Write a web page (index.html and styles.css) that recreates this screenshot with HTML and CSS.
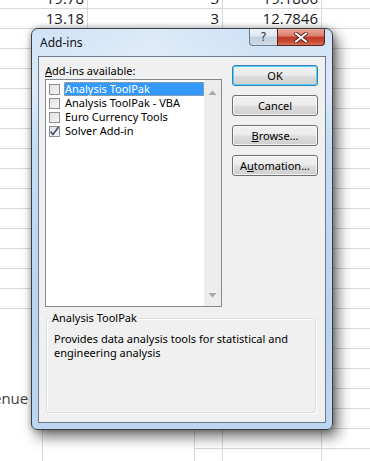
FILE: index.html
```html
<!DOCTYPE html>
<html>
<head>
<meta charset="utf-8">
<link rel="stylesheet" href="styles.css">
</head>
<body>
<div class="sheet">
  <div class="row"><div class="c c1">19.78</div><div class="c c2">3</div><div class="c c3">19.1866</div><div class="c c4"></div></div>
  <div class="row"><div class="c c1">13.18</div><div class="c c2">3</div><div class="c c3">12.7846</div><div class="c c4"></div></div>
  <div class="row"><div class="c c1"></div><div class="c c2"></div><div class="c c3"></div><div class="c c4"></div></div>
  <div class="row"><div class="c c1"></div><div class="c c2"></div><div class="c c3"></div><div class="c c4"></div></div>
  <div class="row"><div class="c c1"></div><div class="c c2"></div><div class="c c3"></div><div class="c c4"></div></div>
  <div class="row"><div class="c c1"></div><div class="c c2"></div><div class="c c3"></div><div class="c c4"></div></div>
  <div class="row"><div class="c c1"></div><div class="c c2"></div><div class="c c3"></div><div class="c c4"></div></div>
  <div class="row"><div class="c c1"></div><div class="c c2"></div><div class="c c3"></div><div class="c c4"></div></div>
  <div class="row"><div class="c c1"></div><div class="c c2"></div><div class="c c3"></div><div class="c c4"></div></div>
  <div class="row"><div class="c c1"></div><div class="c c2"></div><div class="c c3"></div><div class="c c4"></div></div>
  <div class="row"><div class="c c1"></div><div class="c c2"></div><div class="c c3"></div><div class="c c4"></div></div>
  <div class="row"><div class="c c1"></div><div class="c c2"></div><div class="c c3"></div><div class="c c4"></div></div>
  <div class="row"><div class="c c1"></div><div class="c c2"></div><div class="c c3"></div><div class="c c4"></div></div>
  <div class="row"><div class="c c1"></div><div class="c c2"></div><div class="c c3"></div><div class="c c4"></div></div>
  <div class="row"><div class="c c1"></div><div class="c c2"></div><div class="c c3"></div><div class="c c4"></div></div>
  <div class="row"><div class="c c1"></div><div class="c c2"></div><div class="c c3"></div><div class="c c4"></div></div>
  <div class="row low"><div class="c ca"></div><div class="c cb2"></div><div class="c cc"></div><div class="c c3"></div><div class="c c4"></div></div>
  <div class="row low"><div class="c ca"></div><div class="c cb2"></div><div class="c cc"></div><div class="c c3"></div><div class="c c4"></div></div>
  <div class="row low"><div class="c ca"></div><div class="c cb2"></div><div class="c cc"></div><div class="c c3"></div><div class="c c4"></div></div>
  <div class="row low"><div class="c ca"></div><div class="c cb2"></div><div class="c cc"></div><div class="c c3"></div><div class="c c4"></div></div>
  <div class="row low"><div class="c ca label">enue</div><div class="c cb2"></div><div class="c cc"></div><div class="c c3"></div><div class="c c4"></div></div>
  <div class="row low"><div class="c ca"></div><div class="c cb2"></div><div class="c cc"></div><div class="c c3"></div><div class="c c4"></div></div>
  <div class="row low"><div class="c ca"></div><div class="c cb2"></div><div class="c cc"></div><div class="c c3"></div><div class="c c4"></div></div>
  <div class="row low"><div class="c ca"></div><div class="c cb2"></div><div class="c cc"></div><div class="c c3"></div><div class="c c4"></div></div>
</div>

<div class="dialog">
  <div class="titlebar">
    <div class="title">Add-ins</div>
    <div class="caption">
      <div class="cap help">?</div>
      <div class="cap close">
        <svg width="14" height="11" viewBox="0 0 14 11"><path d="M2 1.5 L12 9.5 M12 1.5 L2 9.5" stroke="#4a1a10" stroke-width="3.6" stroke-linecap="round"/><path d="M2 1.5 L12 9.5 M12 1.5 L2 9.5" stroke="#ffffff" stroke-width="2.2" stroke-linecap="round"/></svg>
      </div>
    </div>
  </div>
  <div class="client">
    <div class="top">
      <div class="left">
        <div class="lbl"><u>A</u>dd-ins available:</div>
        <div class="listbox">
          <div class="items">
            <div class="item sel"><span class="cb"></span><span class="txt">Analysis ToolPak</span></div>
            <div class="item"><span class="cb"></span><span class="txt">Analysis ToolPak - VBA</span></div>
            <div class="item"><span class="cb"></span><span class="txt">Euro Currency Tools</span></div>
            <div class="item"><span class="cb checked"><svg width="11" height="11" viewBox="0 0 11 11"><path d="M1.5 5.5 L4 8.5 L9.5 1" fill="none" stroke="#3f4f77" stroke-width="1.6"/></svg></span><span class="txt">Solver Add-in</span></div>
          </div>
          <div class="scroll">
            <svg width="9" height="5" viewBox="0 0 9 5"><path d="M0.5 5 L4.5 0.5 L8.5 5 Z" fill="#a8a8a8"/></svg>
            <svg width="9" height="5" viewBox="0 0 9 5"><path d="M0.5 0 L4.5 4.5 L8.5 0 Z" fill="#a8a8a8"/></svg>
          </div>
        </div>
      </div>
      <div class="buttons">
        <div class="btn default">OK</div>
        <div class="btn">Cancel</div>
        <div class="btn"><u>B</u>rowse...</div>
        <div class="btn">A<u>u</u>tomation...</div>
      </div>
    </div>
    <div class="group">
      <div class="legend">Analysis ToolPak</div>
      <div class="desc">Provides data analysis tools for statistical and engineering analysis</div>
    </div>
  </div>
</div>
</body>
</html>
```

FILE: styles.css
```css
html, body {
  margin: 0;
  padding: 0;
  width: 370px;
  height: 461px;
  overflow: hidden;
  background: #ffffff;
}
.sheet {
  margin-top: -11px;
  font-family: "Open Sans", "Noto Sans", sans-serif;
  font-size: 15px;
  color: #1a1a1a;
}
.row {
  display: flex;
  height: 20px;
  box-sizing: border-box;
  border-bottom: 1px solid #d9d9d9;
}
.row.low {
  border-bottom: none;
}
.c {
  box-sizing: border-box;
  border-right: 1px solid #d9d9d9;
  text-align: right;
  line-height: 19px;
  padding-right: 3px;
  white-space: nowrap;
}
.c1 { width: 88px; }
.c2 { width: 135px; }
.c3 { width: 99px; }
.c4 { flex: 1; border-right: none; }
.ca { width: 43px; }
.cb2 { width: 152px; }
.cc { width: 28px; }
.low .cc, .low .c3, .low .c4 { border-bottom: 1px solid #d9d9d9; }
.label { text-align: left; color: #404040; padding: 0; text-indent: -7px; }

.dialog {
  position: absolute;
  left: 31px;
  top: 28px;
  width: 302px;
  height: 402px;
  box-sizing: border-box;
  border: 1px solid #3c4046;
  border-radius: 7px 7px 6px 6px;
  background: linear-gradient(180deg, #cfe2f6 0px, #dcebfa 60px, #c6ddf5 110px, #b9d4f0 300px, #bdd7f2 400px);
  box-shadow: 5px 7px 14px rgba(0,0,0,0.55), 0 0 6px rgba(0,0,0,0.3);
  display: flex;
  flex-direction: column;
  padding: 0 6px 6px 6px;
  font-family: "Noto Sans", "Open Sans", sans-serif;
  font-size: 11px;
  color: #000;
}
.titlebar {
  height: 28px;
  display: flex;
  align-items: flex-start;
  background: linear-gradient(90deg, rgba(255,255,255,0) 0%, rgba(255,255,255,0.25) 40%, rgba(200,220,240,0.2) 75%, rgba(255,255,255,0) 100%);
  margin: 0 -6px;
  padding: 0 7px 0 8px;
}
.title {
  font-size: 12px;
  line-height: 14px;
  margin-top: 7px;
  color: #111;
}
.caption {
  margin-left: auto;
  display: flex;
}
.cap {
  height: 17px;
  box-sizing: border-box;
  display: flex;
  align-items: center;
  justify-content: center;
}
.help {
  width: 28px;
  border: 1px solid #6f7d90;
  border-top: none;
  border-right: none;
  border-radius: 0 0 0 4px;
  background: linear-gradient(180deg, #eef3f9 0%, #dfe7f0 45%, #c3cfdc 50%, #cfdae6 100%);
  font-family: "DejaVu Sans", sans-serif;
  font-size: 12px;
  color: #33404f;
  line-height: 14px;
}
.close {
  width: 48px;
  border: 1px solid #5a2418;
  border-top: none;
  border-radius: 0 0 4px 0;
  background: linear-gradient(180deg, #e9a89a 0%, #d97a66 45%, #c0392a 50%, #c94a33 80%, #d9735c 100%);
}
.client {
  flex: 1;
  border: 1px solid #6c7a8c;
  background: #f0f0f0;
  display: flex;
  flex-direction: column;
  padding: 7px 9px 9px 6px;
}
.top {
  display: flex;
}
.left {
  display: flex;
  flex-direction: column;
}
.lbl {
  font-size: 11px;
  line-height: 14px;
  margin-bottom: 1px;
}
.listbox {
  width: 177px;
  height: 228px;
  box-sizing: border-box;
  border: 1px solid #828790;
  background: #fff;
  display: flex;
}
.items {
  flex: 1;
  padding: 2px 0 0 2px;
}
.item {
  display: flex;
  align-items: center;
  height: 14px;
}
.cb {
  width: 11px;
  height: 11px;
  box-sizing: border-box;
  border: 1px solid #8f8f8f;
  background: linear-gradient(135deg, #e2e2e2 0%, #f4f4f4 100%);
  margin: 0 4px 0 1px;
  display: flex;
  align-items: center;
  justify-content: center;
}
.cb svg { flex: none; }
.txt {
  flex: 1;
  height: 14px;
  line-height: 14px;
  padding-left: 1px;
  font-size: 11px;
}
.item.sel .txt {
  background: #3399ff;
  color: #fff;
  outline: 1px dotted #c9a36a;
  outline-offset: -1px;
}
.scroll {
  width: 17px;
  background: #ededed;
  display: flex;
  flex-direction: column;
  justify-content: space-between;
  align-items: center;
  padding: 10px 0 8px 0;
}
.buttons {
  margin-left: 10px;
  margin-top: 1px;
  display: flex;
  flex-direction: column;
  gap: 9px;
}
.btn {
  width: 86px;
  height: 21px;
  box-sizing: border-box;
  border: 1px solid #707070;
  border-radius: 3px;
  background: linear-gradient(180deg, #f2f2f2 0%, #ebebeb 48%, #dddddd 52%, #cfcfcf 100%);
  box-shadow: inset 0 0 0 1px rgba(255,255,255,0.7);
  text-align: center;
  line-height: 19px;
  font-size: 11px;
}
.btn.default {
  border-color: #3c7fb1;
  box-shadow: inset 0 0 0 1px #48d2fc;
}
.group {
  margin-top: 11px;
  margin-left: 1px;
  height: 95px;
  box-sizing: border-box;
  border: 1px solid #d5dfe5;
  border-radius: 3px;
  box-shadow: inset 1px 1px 0 #fff, 1px 1px 0 #fff;
  position: relative;
  padding: 13px 8px 0 7px;
}
.legend {
  position: absolute;
  left: 4px;
  top: -8px;
  background: #f0f0f0;
  padding: 0 1px;
  line-height: 14px;
}
.desc {
  line-height: 14px;
}
```
